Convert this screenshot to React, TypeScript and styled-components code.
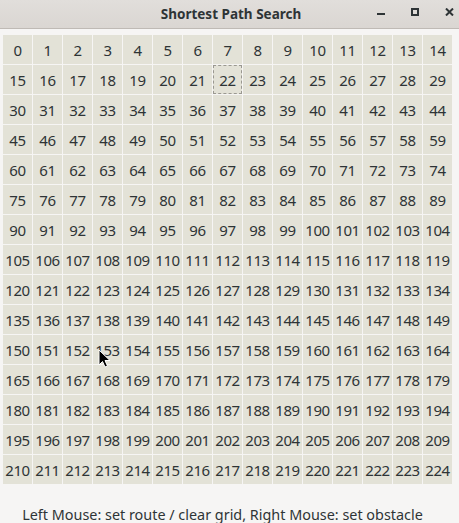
import React from 'react';
import styled, { createGlobalStyle } from 'styled-components';

const GlobalStyle = createGlobalStyle`
  html, body {
    margin: 0;
    padding: 0;
    background: #f6f5f4;
  }
  body {
    font-family: "Noto Sans", "DejaVu Sans", sans-serif;
    color: #2e3436;
  }
`;

const Window = styled.div`
  width: 459px;
  height: 523px;
  background: #f6f5f4;
  display: flex;
  flex-direction: column;
  position: relative;
  overflow: hidden;
`;

const TitleBar = styled.header`
  height: 29px;
  flex: none;
  box-sizing: border-box;
  border-bottom: 1px solid #bfbab5;
  background: linear-gradient(#e1dedb, #dad6d2);
  display: flex;
  align-items: center;
  position: relative;
`;

const Title = styled.h1`
  flex: 1;
  margin: 0;
  text-align: center;
  font-size: 13.5px;
  font-weight: 700;
  color: #2e3436;
  padding-left: 3px;
`;

const Controls = styled.div`
  position: absolute;
  right: 0;
  top: 0;
  height: 24px;
  display: flex;
  align-items: center;
  gap: 14px;
`;

const ControlButton = styled.div`
  width: 20px;
  height: 24px;
  display: flex;
  align-items: center;
  justify-content: center;
`;

const Grid = styled.div`
  margin: 6px 0 0 3px;
  display: grid;
  grid-template-columns: repeat(15, 29px);
  grid-auto-rows: 29px;
  gap: 1px;
`;

const Cell = styled.button<{ $focused?: boolean }>`
  all: unset;
  box-sizing: border-box;
  background: #e3e2d7;
  display: flex;
  align-items: center;
  justify-content: center;
  font-family: "Noto Sans", "DejaVu Sans", sans-serif;
  font-size: 15px;
  letter-spacing: -0.4px;
  color: #2e3436;
  border: ${(p) => (p.$focused ? '1px dashed #9a9890' : 'none')};
  padding-top: 1px;
`;

const Status = styled.footer`
  flex: 1;
  display: flex;
  align-items: center;
  justify-content: center;
  padding-top: 21px;
  padding-right: 14px;
  font-size: 14.4px;
  color: #2e3436;
`;

const Pointer = styled.svg`
  position: absolute;
  left: 98px;
  top: 349px;
`;

const cells = Array.from({ length: 225 }, (_, i) => i);

const App: React.FC = () => {
  return (
    <Window>
      <GlobalStyle />
      <TitleBar>
        <Title>Shortest Path Search</Title>
        <Controls>
          <ControlButton>
            <svg width="9" height="8" viewBox="0 0 9 8">
              <rect x="0" y="5" width="8" height="2" fill="#2e3436" />
            </svg>
          </ControlButton>
          <ControlButton>
            <svg width="8" height="8" viewBox="0 0 8 8">
              <rect x="1" y="1" width="6" height="6" fill="none" stroke="#2e3436" strokeWidth="2" />
            </svg>
          </ControlButton>
          <ControlButton>
            <svg width="9" height="8" viewBox="0 0 9 8">
              <path d="M1 0.5 L8 7.5 M8 0.5 L1 7.5" stroke="#2e3436" strokeWidth="2" />
            </svg>
          </ControlButton>
        </Controls>
      </TitleBar>
      <Grid>
        {cells.map((n) => (
          <Cell key={n} $focused={n === 22}>{n}</Cell>
        ))}
      </Grid>
      <Status>Left Mouse: set route / clear grid, Right Mouse: set obstacle</Status>
      <Pointer width="14" height="20" viewBox="0 0 14 20">
        <path d="M1 1 L1 16 L4.5 12.5 L7 18 L9.5 17 L7 11.5 L12 11.5 Z" fill="#000" stroke="#fff" strokeWidth="1" strokeLinejoin="round" />
      </Pointer>
    </Window>
  );
};

export default App;
